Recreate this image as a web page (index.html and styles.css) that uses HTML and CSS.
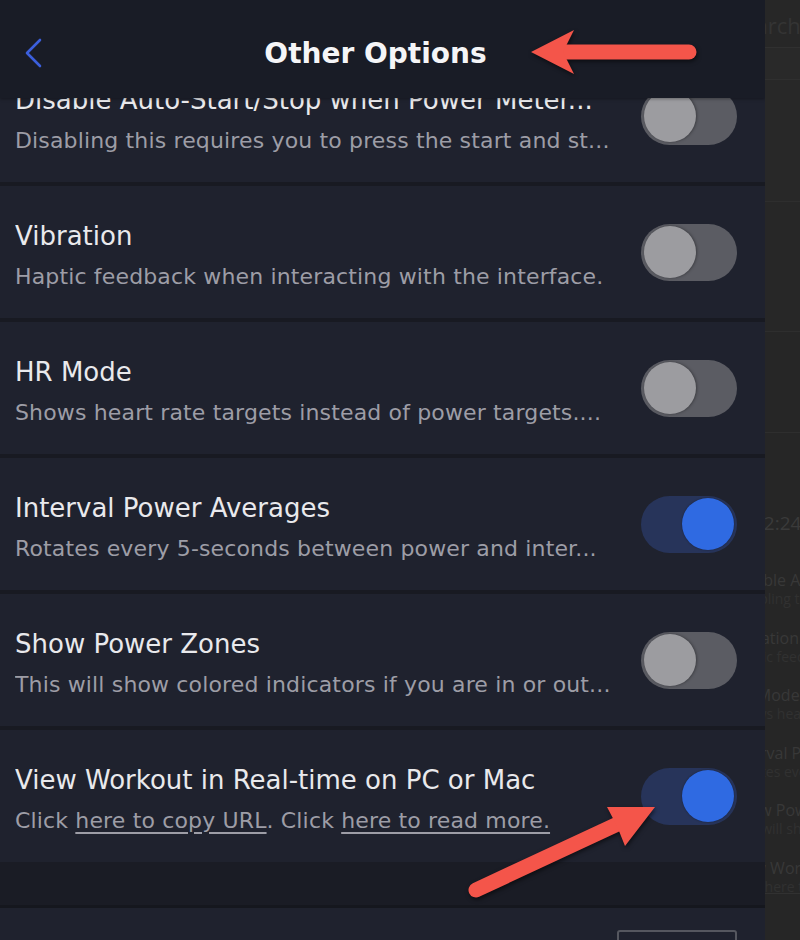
FILE: index.html
```html
<!DOCTYPE html>
<html lang="en">
<head>
<meta charset="utf-8">
<title>Other Options</title>
<link rel="stylesheet" href="styles.css">
</head>
<body>
<div class="screen">
  <div class="drawer">
    <header class="topbar">
      <svg class="back" width="20" height="30" viewBox="0 0 20 30"><path d="M16 2 L3 15 L16 28" fill="none" stroke="#3b5fdc" stroke-width="2.6" stroke-linecap="round" stroke-linejoin="round"/></svg>
      <h1 class="title">Other Options</h1>
    </header>
    <div class="list">
      <div class="row">
        <div class="text"><div class="name">Disable Auto-Start/Stop when Power Meter...</div><div class="desc">Disabling this requires you to press the start and st...</div></div>
        <div class="toggle off"><span class="knob"></span></div>
      </div>
      <div class="row">
        <div class="text"><div class="name">Vibration</div><div class="desc">Haptic feedback when interacting with the interface.</div></div>
        <div class="toggle off"><span class="knob"></span></div>
      </div>
      <div class="row">
        <div class="text"><div class="name">HR Mode</div><div class="desc">Shows heart rate targets instead of power targets....</div></div>
        <div class="toggle off"><span class="knob"></span></div>
      </div>
      <div class="row">
        <div class="text"><div class="name">Interval Power Averages</div><div class="desc">Rotates every 5-seconds between power and inter...</div></div>
        <div class="toggle on"><span class="knob"></span></div>
      </div>
      <div class="row">
        <div class="text"><div class="name">Show Power Zones</div><div class="desc">This will show colored indicators if you are in or out...</div></div>
        <div class="toggle off"><span class="knob"></span></div>
      </div>
      <div class="row last">
        <div class="text"><div class="name">View Workout in Real-time on PC or Mac</div><div class="desc">Click <span class="link">here to copy URL</span>. Click <span class="link">here to read more.</span></div></div>
        <div class="toggle on"><span class="knob"></span></div>
      </div>
    </div>
    <div class="band"></div>
    <div class="section2"><div class="outline-btn"></div></div>
  </div>
  <div class="backdrop">
    <div class="bg-inner">
      <div class="bg-search">Search</div>
      <div class="bg-tab"></div>
      <div class="bg-block b1"></div>
      <div class="bg-block b2"></div>
      <div class="bg-block b3"></div>
      <div class="bg-time">12:24</div>
      <div class="bg-list">
        <div class="bg-item"><div class="bg-name">Disable Auto-Start</div><div class="bg-desc">Disabling this requires</div></div>
        <div class="bg-item"><div class="bg-name">Vibration</div><div class="bg-desc">Haptic feedback</div></div>
        <div class="bg-item"><div class="bg-name">HR Mode</div><div class="bg-desc">Shows heart rate</div></div>
        <div class="bg-item"><div class="bg-name">Interval Power</div><div class="bg-desc">Rotates every</div></div>
        <div class="bg-item"><div class="bg-name">Show Power Zones</div><div class="bg-desc">This will show</div></div>
        <div class="bg-item"><div class="bg-name">View Workout</div><div class="bg-desc">Click <u>here to copy</u></div></div>
      </div>
    </div>
  </div>
  <svg class="annot" width="800" height="940" viewBox="0 0 800 940">
    <g class="arrow">
      <line x1="560" y1="52" x2="689" y2="52" stroke="#f4554a" stroke-width="15" stroke-linecap="round"/>
      <polygon points="531,52 574,30 563,52 574,74" fill="#f4554a"/>
      <line x1="476" y1="890" x2="622" y2="822" stroke="#f4554a" stroke-width="15" stroke-linecap="round"/>
      <polygon points="655,807 607,807 617,826 625,846" fill="#f4554a"/>
    </g>
  </svg>
</div>
</body>
</html>
```

FILE: styles.css
```css
* { box-sizing: border-box; }
html, body { margin: 0; padding: 0; }
body {
  width: 800px;
  height: 940px;
  overflow: hidden;
  background: #262626;
  font-family: "DejaVu Sans", "Open Sans", sans-serif;
}
.screen {
  position: relative;
  display: flex;
  width: 800px;
  height: 940px;
}
.drawer {
  position: relative;
  width: 765px;
  flex: none;
  height: 940px;
  overflow: hidden;
  background: #1f222e;
}
.topbar {
  position: absolute;
  top: 0;
  left: 0;
  right: 0;
  height: 98px;
  background: #191c26;
  display: flex;
  align-items: center;
  justify-content: center;
  z-index: 2;
  box-shadow: 0 1px 3px rgba(0,0,0,0.35);
}
.back {
  position: absolute;
  left: 24px;
  top: 38px;
}
.title {
  margin: 0 0 0 -14px;
  color: #f5f5f7;
  font-size: 28px;
  line-height: 36px;
  font-weight: 700;
  padding-top: 10px;
}
.list {
  padding-top: 50px;
}
.row {
  height: 136px;
  border-bottom: 4px solid #181a22;
  display: flex;
  align-items: center;
  padding: 0 28px 0 15px;
}
.row.last {
  border-bottom: none;
  height: 132px;
}
.text {
  flex: 1;
  min-width: 0;
  white-space: nowrap;
  overflow: hidden;
  padding-top: 8px;
}
.name {
  color: #e9e9ec;
  font-size: 26px;
  line-height: 32px;
}
.desc {
  color: #9d9da6;
  font-size: 22px;
  line-height: 30px;
  letter-spacing: 0.15px;
  margin-top: 10px;
}
.link {
  text-decoration: underline;
  text-underline-offset: 4px;
  text-decoration-thickness: 1.5px;
}
.toggle {
  flex: none;
  width: 96px;
  height: 57px;
  border-radius: 29px;
  display: flex;
  align-items: center;
  padding: 0 3px;
  margin-left: 20px;
}
.toggle .knob {
  width: 52px;
  height: 52px;
  border-radius: 50%;
}
.toggle.off { background: #5b5c63; }
.toggle.off .knob {
  background: #9c9ca0;
  box-shadow: 1px 0 3px rgba(0,0,0,0.35);
}
.toggle.on {
  background: #27345a;
  justify-content: flex-end;
}
.toggle.on .knob {
  background: #2f6ae2;
  box-shadow: 0 0 2px rgba(0,0,0,0.4);
}
.band {
  height: 46px;
  background: #1a1c25;
  border-bottom: 3px solid #15171e;
}
.section2 {
  height: 120px;
  background: #1f222e;
  display: flex;
  justify-content: flex-end;
  padding: 22px 28px 0 0;
}
.outline-btn {
  width: 120px;
  height: 60px;
  border: 2px solid #55575f;
  border-radius: 3px;
}
/* backdrop page behind the drawer */
.backdrop {
  flex: 1;
  height: 940px;
  overflow: hidden;
  background: #262626;
}
.bg-inner {
  width: 320px;
  margin-left: -34px;
  color: #3a3a3a;
  font-family: "Open Sans", sans-serif;
}
.bg-search {
  height: 48px;
  line-height: 50px;
  font-size: 22px;
  color: #343434;
  padding-left: 0;
  border-bottom: 1px solid #303030;
  background: #272727;
}
.bg-tab {
  height: 32px;
  background: #292929;
  border-bottom: 1px solid #2f2f2f;
}
.bg-block { border-bottom: 1px solid #2e2e2e; }
.b1 { height: 122px; background: #282828; }
.b2 { height: 130px; background: #272727; }
.b3 { height: 101px; background: #262626; }
.bg-time {
  padding-top: 78px;
  line-height: 24px;
  font-size: 19px;
  color: #3a3a3a;
  margin-left: 22px;
}
.bg-list {
  margin-top: 16px;
}
.bg-item {
  height: 57.5px;
  padding-top: 20px;
  white-space: nowrap;
}
.bg-name {
  font-size: 16px;
  line-height: 18px;
  color: #383838;
}
.bg-desc {
  font-size: 14px;
  line-height: 16px;
  margin-top: 2px;
  color: #313131;
}
.annot {
  position: absolute;
  left: 0;
  top: 0;
  pointer-events: none;
  z-index: 5;
}
.arrow {
  filter: drop-shadow(1px 2px 2px rgba(0,0,0,0.55));
}
```
